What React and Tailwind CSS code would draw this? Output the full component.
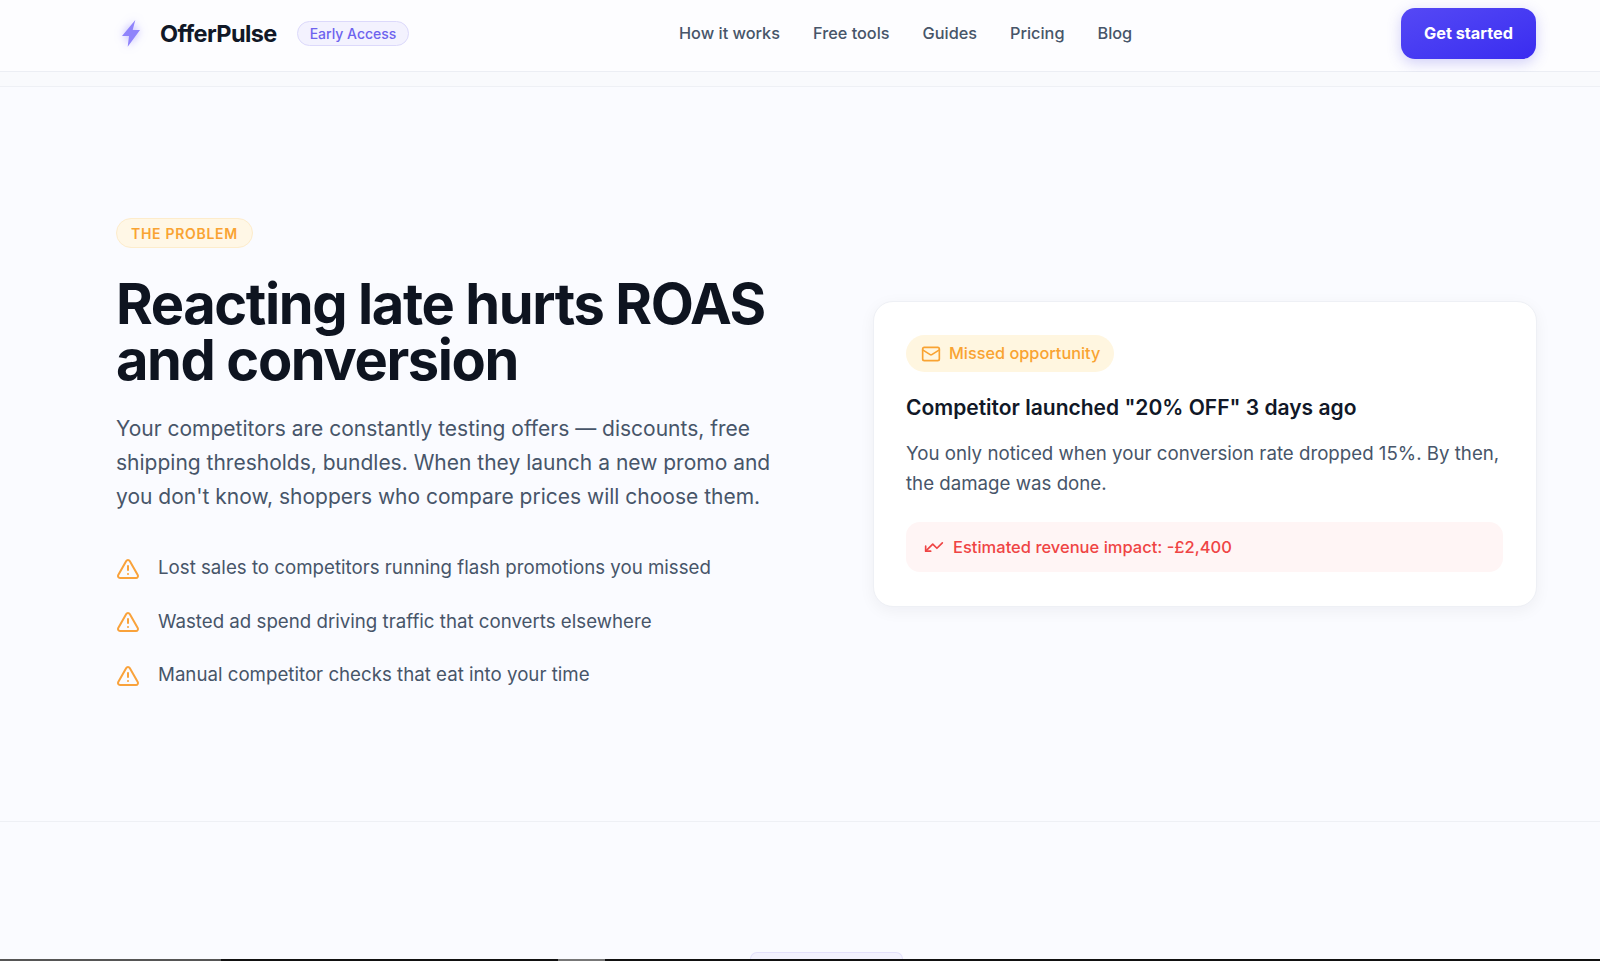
import { Mail, TriangleAlert, TrendingDown } from 'lucide-react';

const NAV_LINKS = ['How it works', 'Free tools', 'Guides', 'Pricing', 'Blog'];

const PAIN_POINTS = [
  'Lost sales to competitors running flash promotions you missed',
  'Wasted ad spend driving traffic that converts elsewhere',
  'Manual competitor checks that eat into your time',
];

function Bolt() {
  return (
    <svg viewBox="0 0 18 27" className="w-[18px] h-[27px] drop-shadow-[0_0_4px_rgba(124,108,255,0.5)]">
      <path d="M13.3 0 0 16h7L5.7 26.7 18 10h-7.3z" fill="#8f83fb" />
    </svg>
  );
}

function Header() {
  return (
    <header className="h-[72px] shrink-0 bg-[#fdfdff] border-b border-[#eceef4] pl-[116px] pr-[64px] pb-[4px] flex items-center shadow-[0_1px_3px_rgba(15,23,42,0.03)]">
      <div className="w-[563px] flex items-center">
        <div className="ml-[6px] flex items-center">
          <Bolt />
        </div>
        <span className="ml-[20px] text-[23.5px] font-bold tracking-[-0.6px] text-[#111827]">OfferPulse</span>
        <span className="ml-[20px] h-[25px] px-[12px] flex items-center rounded-full border border-[#dcd9fb] bg-[#f3f2fe] text-[14px] font-medium text-[#6d63ee]">
          Early Access
        </span>
      </div>
      <nav className="flex items-center gap-[33px]">
        {NAV_LINKS.map((link) => (
          <a key={link} href="#" className="text-[16.3px] font-medium text-[#475569]">
            {link}
          </a>
        ))}
      </nav>
      <a
        href="#"
        className="ml-auto w-[135px] h-[51px] flex items-center justify-center rounded-[14px] bg-gradient-to-br from-[#5548f5] to-[#3a2bf0] text-[16.3px] font-bold text-white shadow-[0_4px_14px_rgba(79,70,229,0.25)]"
      >
        Get started
      </a>
    </header>
  );
}

function ProblemCopy() {
  return (
    <div className="w-[662px]">
      <span className="inline-flex items-center h-[30px] px-[14px] rounded-full border border-[#fdeccb] bg-[#fff7e6] text-[14px] font-semibold tracking-[0.7px] text-[#f9a332]">
        THE PROBLEM
      </span>
      <h1 className="mt-[28px] text-[56px] leading-[56px] font-bold tracking-[-1.4px] text-[#0e1420]">
        Reacting late hurts ROAS
        <br />
        and conversion
      </h1>
      <p className="mt-[24px] w-[662px] text-[21px] leading-[34px] text-[#475569]">
        Your competitors are constantly testing offers — discounts, free shipping thresholds, bundles. When they launch
        a new promo and you don't know, shoppers who compare prices will choose them.
      </p>
      <ul className="mt-[41px] mb-[1px] flex flex-col gap-[26.5px]">
        {PAIN_POINTS.map((item) => (
          <li key={item} className="flex items-center gap-[18px] h-[27px] text-[18.7px] text-[#475569]">
            <TriangleAlert className="w-[24px] h-[24px] text-[#f9a23b] shrink-0" strokeWidth={2} />
            {item}
          </li>
        ))}
      </ul>
    </div>
  );
}

function MissedCard() {
  return (
    <div className="w-[664px] h-[306px] rounded-[20px] border border-[#eef0f5] bg-white pl-[32px] pr-[33px] pt-[33px] shadow-[0_4px_16px_rgba(15,23,42,0.05)]">
      <span className="inline-flex items-center gap-[8px] h-[37px] pl-[15px] pr-[14px] rounded-full bg-[#fff6e0] text-[16.3px] font-medium text-[#f9a332]">
        <Mail className="w-[20px] h-[20px]" strokeWidth={2} />
        Missed opportunity
      </span>
      <h3 className="mt-[20px] text-[21px] leading-[32px] font-semibold text-[#111827]">
        Competitor launched "20% OFF" 3 days ago
      </h3>
      <p className="mt-[15px] text-[18.7px] leading-[30px] text-[#475569]">
        You only noticed when your conversion rate dropped 15%. By then, the damage was done.
      </p>
      <div className="mt-[23px] h-[50px] px-[18px] flex items-center gap-[9px] rounded-[14px] bg-[#fff5f5] text-[16.5px] font-medium text-[#ef4444]">
        <TrendingDown className="w-[20px] h-[20px] -scale-x-100" strokeWidth={2} />
        Estimated revenue impact: -£2,400
      </div>
    </div>
  );
}

export default function App() {
  return (
    <div className="h-[961px] overflow-hidden flex flex-col bg-[#fafbff] font-['Inter',sans-serif]">
      <Header />
      <div className="h-[15px] shrink-0 bg-[#f9fafd] border-b border-[#eef0f5]" />
      <section className="h-[735px] shrink-0 pl-[116px] pr-[63px] flex items-center justify-between border-b border-[#eef0f5]">
        <ProblemCopy />
        <MissedCard />
      </section>
      <div className="flex-1 flex flex-col justify-end items-center pl-[53px]">
        <div className="w-[153px] h-[7px] rounded-t-[12px] border border-b-0 border-[#e3e0fb] bg-[#f3f2fe]" />
      </div>
      <div className="h-[2px] shrink-0 flex bg-[#111111]">
        <div className="w-[221px] bg-[#555555]" />
        <div className="ml-[337px] w-[47px] bg-[#777777]" />
      </div>
    </div>
  );
}
